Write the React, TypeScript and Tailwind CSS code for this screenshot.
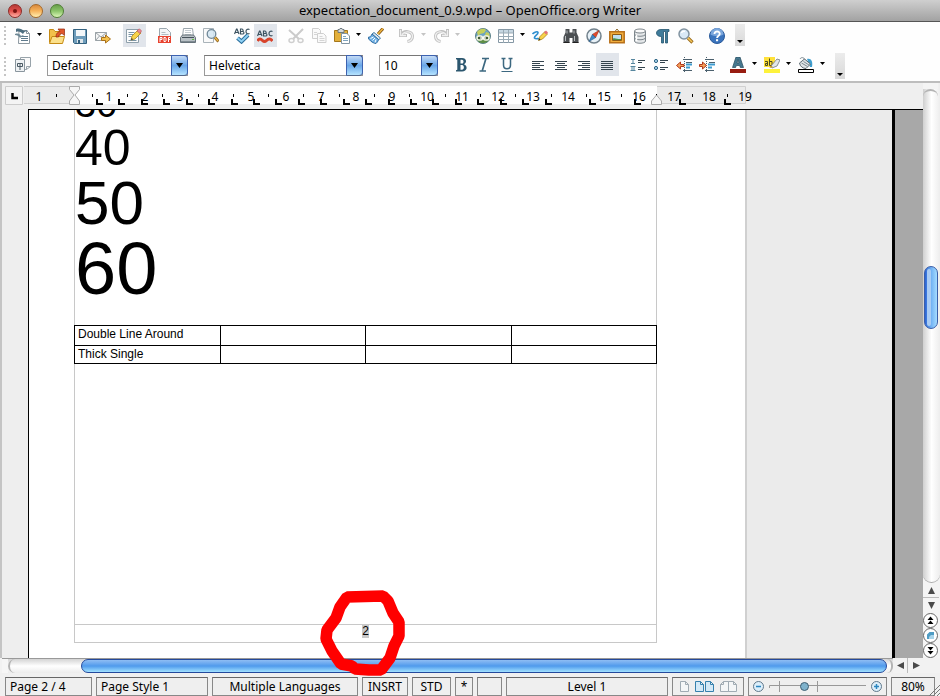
import React from "react";

type Kids = { children?: React.ReactNode };

const Svg = ({ children }: Kids) => (
  <svg width="16" height="16" viewBox="0 0 16 16" fill="none" aria-hidden="true">{children}</svg>
);

/* ---------- toolbar glyphs ---------- */
const icons: Record<string, React.ReactNode> = {
  "New document": (
    <Svg>
      <path d="M4 2.500h7.500l3 3v10h-11z" fill="#fff" stroke="#8b979f" />
      <path d="M11.500 2.500v3h3" stroke="#8b979f" />
      <path d="M6 8.500h7M6 10.500h7M6 12.500h7" stroke="#5f7b8d" />
      <path d="M1 1c3-1 6 0 8 2 2-1 3-1 4 0-3 0-4 1-5 3C6 4 4 3 1 4z" fill="#4d6e80" />
      <path d="M0 6c3-1 5 0 6 2 1-1 2-1 3 0-2 0-3 1-4 2-1-2-3-3-5-3z" fill="#6f8996" />
    </Svg>
  ),
  Open: (
    <Svg>
      <path d="M.5 14.500v-13h4l1.500 2h5v4" fill="#f2c14b" stroke="#c58a14" />
      <path d="M.5 15.500 3 8.500h12.500l-2 7z" fill="#fbe08a" stroke="#c58a14" />
      <path d="M7 9c0-4 2-5 4-5.500L9 1h6.500v6.500L13 5.500C11 6 10 7 9.500 9z" fill="#e0572b" stroke="#8f2a10" strokeWidth=".7" />
    </Svg>
  ),
  Save: (
    <Svg>
      <path d="M1.500 1.500h13v14h-12l-1-1z" fill="#6f9dbb" stroke="#33617f" />
      <path d="M4 2h9v6H4z" fill="#f4f7f9" />
      <path d="M5 11h6v4H5z" fill="#dfe6ea" />
      <path d="M6 12h2v3H6z" fill="#33617f" />
    </Svg>
  ),
  "Document as e-mail": (
    <Svg>
      <path d="M.5 4.500h11v8H.5z" fill="#f6f6f6" stroke="#9aa2a7" />
      <path d="m.5 4.500 5.500 4.500 5.500-4.500M.5 12.500 4.500 8M11.500 12.500 8 8" stroke="#9aa2a7" />
      <path d="M6.500 9.500h4V7l5 4-5 4v-2.500h-4z" fill="#f5c14d" stroke="#a8701a" />
    </Svg>
  ),
  "Edit file": (
    <Svg>
      <path d="M.5 1.500h12v13H.5z" fill="#fdfdfd" stroke="#8fa0ab" />
      <path d="M2.500 4.500h6M2.500 6.500h5M2.500 8.500h3M2.500 12.500h8" stroke="#7a94a5" />
      <path d="m5 12 1-4 6-6 3 3-6 6z" fill="#f8d34a" stroke="#b08418" strokeWidth=".8" />
      <path d="m11 3 1.500-1.800c1-.8 3.500 1.300 2.700 2.500L14 5.500z" fill="#e88a93" stroke="#b6535d" strokeWidth=".6" />
      <path d="m5 12 .6-2 1.500 1.300z" fill="#333" />
    </Svg>
  ),
  "Export as PDF": (
    <Svg>
      <path d="M2.500.5h7l4 4v5h-11z" fill="#f4f6f7" stroke="#9aa7af" />
      <path d="M4.500 4.500h4M4.500 6.500h7" stroke="#b3bec5" />
      <path d="M1 8h13v7H1z" fill="#e8432f" />
      <path d="M3 14V9.500h2v2H3M7 9.500h1.500l.5.500v3l-.5.500H7zM11.500 14V9.500H13M11.500 11.500H13" stroke="#fff" />
    </Svg>
  ),
  Print: (
    <Svg>
      <path d="M3.500.5h9l1 8h-11z" fill="#fff" stroke="#9ba6ad" />
      <path d="M5 2.500h6M5 4.500h6M5 6.500h6" stroke="#c3cbd0" />
      <path d="M.5 9.500 2.500 7h11l2 2.500v5H.5z" fill="#b8c0c5" stroke="#66727a" />
      <path d="M2 9.500h12" stroke="#46525a" />
      <path d="M1 13.500h14" stroke="#7f8b92" />
      <path d="M12 11.500h2" stroke="#5cb83c" />
    </Svg>
  ),
  "Page preview": (
    <Svg>
      <path d="M.5.500h10v14H.5z" fill="#fafafa" stroke="#a9b3b9" />
      <circle cx="8.500" cy="6" r="4.300" fill="#d4e6f2" fillOpacity=".85" stroke="#6f8797" strokeWidth="1.300" />
      <path d="m12 9.500 3.500 4" stroke="#8a5f1d" strokeWidth="3" />
      <path d="m12 9.500 3 3.500" stroke="#e9b84c" strokeWidth="1.400" />
    </Svg>
  ),
  Spellcheck: (
    <Svg>
      <path d="m.5 6 2-5h.5l2 5M1.500 4.500h3M6.500 1v5h2.500c1.500-.5 1-2 0-2.500H6.500h2c1-.5.8-2-.5-2.500zM15.500 1.500c-2-1-3.500.2-3.500 2s1.500 3 3.500 2" stroke="#3b5260" strokeWidth="1.200" />
      <path d="m3.500 10 4 3.500L14 7" stroke="#2a6e9c" strokeWidth="4" />
      <path d="m3.500 10 4 3.500L14 7" stroke="#8fd1f4" strokeWidth="2" />
    </Svg>
  ),
  "Auto spellcheck": (
    <Svg>
      <path d="m.5 8 2-5h.5l2 5M1.500 6.500h3M6.500 3v5h2.500c1.500-.5 1-2 0-2.500H6.500h2c1-.5.8-2-.5-2.500zM15.500 3.500c-2-1-3.500.2-3.500 2s1.500 3 3.500 2" stroke="#3b5260" strokeWidth="1.200" />
      <path d="M.5 13c1.500-2.500 3-2.500 5-.5 1.500 1.500 2.500 1.500 4 0 2-2 4-2 6 .5" stroke="#d8432b" strokeWidth="3" />
    </Svg>
  ),
  Cut: (
    <Svg>
      <path d="m1 2 10 9M15 1 5 11" stroke="#cbcbcb" strokeWidth="2" />
      <ellipse cx="3.500" cy="12.500" rx="2.500" ry="2" stroke="#cfcfcf" strokeWidth="1.500" />
      <ellipse cx="12.500" cy="12.500" rx="2.500" ry="2" stroke="#cfcfcf" strokeWidth="1.500" />
    </Svg>
  ),
  Copy: (
    <Svg>
      <path d="M1.500.5h6l2 2v8h-8z" fill="#fafafa" stroke="#cfcfcf" />
      <path d="M6.500 5.500h6l2.500 2.500v6.500h-8.500z" fill="#fafafa" stroke="#cfcfcf" />
      <path d="M3 4.500h3M3 6.500h3M8.500 8.500h3M8.500 10.500h5M8.500 12.500h5" stroke="#d5d5d5" />
    </Svg>
  ),
  Paste: (
    <Svg>
      <path d="M.5 2.500h13v11H.5z" fill="#e3b03c" stroke="#a5771a" />
      <path d="M4 1.500h1.500l.5-1h2l.5 1H10v3H4z" fill="#d5d9db" stroke="#6f7a80" />
      <path d="M7.500 5.500h5.500l2.500 2.500v7.500h-8z" fill="#fff" stroke="#8094a2" />
      <path d="M9 8.500h3M9 10.500h5M9 12.500h5" stroke="#7fa5c0" />
    </Svg>
  ),
  "Format paintbrush": (
    <Svg>
      <path d="m10 6 5-5.500" stroke="#7a4d10" strokeWidth="3" />
      <path d="m10 6 5-5.500" stroke="#f0b640" strokeWidth="1.600" />
      <path d="M6 4.500 12.500 10l-2 2L4 6z" fill="#dbe6ee" stroke="#3e78a4" />
      <path d="M4 6C3.500 8 2 9 0 9.500 1 12 4 15 8 15.500c1-1 2-2 2.500-4z" fill="#6fb0e4" stroke="#2f6ba0" />
      <path d="m2.500 10.500 3-1.500M4.500 12.500 7 10M7 14.500l1-3" stroke="#fff" />
    </Svg>
  ),
  Undo: (
    <Svg>
      <path d="M1.500 1v6.500H8M2.500 6.500C5 2 13 3 13.500 8c0 3-2 5-5 5.500" stroke="#bfbfbf" strokeWidth="3" />
      <path d="M1.500 2v5.500H7M3 6.500C6 2.500 13 3 13.500 8c0 3-2 5-4.500 5.500" stroke="#f0f0f0" strokeWidth="1.300" />
    </Svg>
  ),
  Redo: (
    <Svg>
      <path d="M14.500 1v6.500H8M13.500 6.500C11 2 3 3 2.500 8c0 3 2 5 5 5.500" stroke="#bfbfbf" strokeWidth="3" />
      <path d="M14.500 2v5.500H9M13 6.500C10 2.500 3 3 2.500 8c0 3 2 5 4.500 5.500" stroke="#f0f0f0" strokeWidth="1.300" />
    </Svg>
  ),
  Hyperlink: (
    <Svg>
      <circle cx="8" cy="8" r="7.500" fill="#6aa3c4" stroke="#5a7f86" />
      <path d="M2 4c3-4 7-4 9-2L9 5 5 6 3 8zM11 4l3 1 1 4-3 1-2-3z" fill="#c5cf5c" />
      <path d="M1 9h14c-1 8-13 8-14 0z" fill="#5f8f46" />
      <rect x="2" y="8" width="5.500" height="4" rx="2" fill="#3f5c34" stroke="#f2f4e6" strokeWidth="1.500" />
      <rect x="8.500" y="8" width="5.500" height="4" rx="2" fill="#3f5c34" stroke="#f2f4e6" strokeWidth="1.500" />
      <path d="M5 10h6" stroke="#fff" strokeWidth="1.200" />
    </Svg>
  ),
  Table: (
    <Svg>
      <path d="M.5 1.500h15v13H.5z" fill="#fff" stroke="#8497a4" />
      <path d="M1 2h14v3H1z" fill="#c7d7e2" />
      <path d="M.5 5h15M.5 8.500h15M.5 11.500h15M5.500 2v13M10.500 2v13" stroke="#9aaab5" />
    </Svg>
  ),
  "Show draw functions": (
    <Svg>
      <path d="M.5 6c2-2 5-3 5.500-1.500.5 2-4.500 4-3.500 5.500s4 0 5.500 1" stroke="#2f8fcf" strokeWidth="1.600" />
      <path d="m6.500 12.500 1.500-4 5-5 2.500 2.500-5 5z" fill="#f8d34a" stroke="#a98018" strokeWidth=".8" />
      <path d="m12 4.500 2-2 2 2-2 2z" fill="#e4707a" />
      <path d="m6.500 12.500.7-2 1.500 1.200z" fill="#333" />
    </Svg>
  ),
  "Find and replace": (
    <Svg>
      <path d="M2.500 1h4v3.500h3V1h4v3.500L15.500 9v6H9.500v-5h-3v5H.5V9l2-4.500z" fill="#4b4f52" />
      <path d="M2.500 8v5M11.500 8v5M4 2.500v3M11 2.500v3" stroke="#b5babd" />
      <path d="M.5 14.500h6M9.500 14.500h6" stroke="#202020" />
    </Svg>
  ),
  Navigator: (
    <Svg>
      <circle cx="8" cy="8" r="7" fill="#e9f2f8" stroke="#71818c" strokeWidth="1.500" />
      <path d="M13 2.500 9.600 9.600 6.400 6.400z" fill="#e04a2c" stroke="#a52a15" strokeWidth=".6" />
      <path d="m3 13.500 3.400-7.100 3.200 3.200z" fill="#3f87c4" stroke="#225a8c" strokeWidth=".6" />
    </Svg>
  ),
  Gallery: (
    <Svg>
      <path d="M6 3.500 8 1l2 2.500" stroke="#8d6a2c" />
      <path d="M.8 3.800h14.400v11H.8z" fill="#f0ad3d" stroke="#b8701a" strokeWidth="1.500" />
      <path d="M3.500 6.500h9v6h-9z" fill="#bfe0f2" stroke="#8d5b17" />
      <path d="M4 12v-1.500c2-1 5 1 8 .5v1z" fill="#4f8f4a" />
    </Svg>
  ),
  "Data sources": (
    <Svg>
      <path d="M2.500 3v10c0 3 11 3 11 0V3" fill="#e4e7e9" stroke="#7d868c" />
      <path d="M2.500 6c0 3 11 3 11 0M2.500 9.500c0 3 11 3 11 0" stroke="#7d868c" />
      <ellipse cx="8" cy="3" rx="5.500" ry="2" fill="#fafafa" stroke="#7d868c" />
      <path d="M4.500 7v6" stroke="#fff" strokeWidth="1.500" />
    </Svg>
  ),
  "Nonprinting characters": (
    <Svg>
      <path d="M14 1.500H6c-6 0-6 7 0 7h.5V15h2V3.500h2V15h2V3.500H14z" fill="#3f7b9a" stroke="#23566f" strokeWidth=".8" />
    </Svg>
  ),
  Zoom: (
    <Svg>
      <circle cx="6" cy="6" r="5" fill="#d9e9f6" stroke="#8193a0" strokeWidth="1.500" />
      <path d="M3.500 5c.5-1.500 2-2 3.500-1.500" stroke="#fff" strokeWidth="1.500" />
      <path d="m10 10 4.500 4.500" stroke="#996a1b" strokeWidth="3.200" />
      <path d="m10 10 4 4" stroke="#f4c65a" strokeWidth="1.600" />
    </Svg>
  ),
  Help: (
    <Svg>
      <circle cx="8" cy="8" r="7.500" fill="#3b74bd" stroke="#2a5a9a" />
      <path d="M1.500 6.500a6.500 6.500 0 0 1 13 0c-4 2-9 2-13 0z" fill="#7ba7dd" />
      <path d="M5.500 6c0-3.500 5.500-3.200 5.200 0-.2 1.700-2.600 1.800-2.600 4" stroke="#fff" strokeWidth="1.900" />
      <path d="M7 11.200h2.100v2H7z" fill="#fff" />
    </Svg>
  ),
  "Styles and formatting": (
    <Svg>
      <path d="M5.500.5h10v9l-4 3h-6z" fill="#fafafa" stroke="#98a3aa" />
      <path d="M15.500 9.500h-4v3" stroke="#98a3aa" />
      <path d="M.5 2.500h9v12H.5z" fill="#eef1f3" stroke="#8a969e" />
      <path d="M2.500 6.500h5v3h-5zM5 7v6" stroke="#4b5a64" />
    </Svg>
  ),
  Bold: (
    <Svg>
      <path fillRule="evenodd" d="M3 1h6c5 0 5 5 2 6.200 4 1.300 3.500 7.300-2 7.300H3v-1.300l1.300-.4V2.700L3 2.300zm4.500 1.700V6.500H9c2 0 2-3.800 0-3.800zm0 5.300v4.800H9c2.500 0 2.500-4.800 0-4.800z" fill="#2b566e" />
    </Svg>
  ),
  Italic: (
    <Svg>
      <path d="M6 1.500h7M9.800 2 6.200 14M3.500 14h6.500" stroke="#3c6880" strokeWidth="1.700" />
    </Svg>
  ),
  Underline: (
    <Svg>
      <path d="M2.500 1.500h4M9.500 1.500h4M4.500 2v6c0 5 7 5 7 0V2" stroke="#3c6880" strokeWidth="1.500" />
      <path d="M2.500 14.500h11" stroke="#3c6880" />
    </Svg>
  ),
  "Align left": (
    <Svg><path d="M2 4.500h12M2 6.500h8M2 8.500h12M2 10.500h8M2 12.500h12" stroke="#34444e" /></Svg>
  ),
  Centered: (
    <Svg><path d="M2 4.500h12M4 6.500h8M2 8.500h12M4 10.500h8M2 12.500h12" stroke="#34444e" /></Svg>
  ),
  "Align right": (
    <Svg><path d="M2 4.500h12M6 6.500h8M2 8.500h12M6 10.500h8M2 12.500h12" stroke="#34444e" /></Svg>
  ),
  Justified: (
    <Svg><path d="M2 4.500h12M2 6.500h12M2 8.500h12M2 10.500h12M2 12.500h12" stroke="#34444e" /></Svg>
  ),
  "Numbering on/off": (
    <Svg>
      <path d="M1 2.500h4M3 2.500v4M1 6.500h4M.5 9.500h5M.5 13.500h5M2 9.500v4M4 9.500v4" stroke="#57879f" />
      <path d="M8 3.500h7M8 5.500h4M8 10.500h7M8 12.500h4" stroke="#34444e" />
    </Svg>
  ),
  "Bullets on/off": (
    <Svg>
      <circle cx="3" cy="4" r="1.600" fill="#a8d2ea" stroke="#2c6484" />
      <circle cx="3" cy="11" r="1.600" fill="#a8d2ea" stroke="#2c6484" />
      <path d="M7 3.500h8M7 5.500h5M7 10.500h8M7 12.500h5" stroke="#34444e" />
    </Svg>
  ),
  "Decrease indent": (
    <Svg>
      <path d="M7 2.500h9M10 5.500h6M7 13.500h9" stroke="#4b606d" />
      <path d="M10 7.500h6M10 10.500h4" stroke="#3d9bd0" strokeWidth="2" />
      <path d="M8.500 0v16" stroke="#4b606d" strokeDasharray="1 1" />
      <path d="M.5 8.500 4.500 5v2.500H8v2H4.500V12z" fill="#f1a15a" stroke="#b5381b" />
    </Svg>
  ),
  "Increase indent": (
    <Svg>
      <path d="M6 2.500h9M10 5.500h6M6 13.500h9" stroke="#4b606d" />
      <path d="M9 7.500h7M9 10.500h4" stroke="#3d9bd0" strokeWidth="2" />
      <path d="M7.500 0v16" stroke="#4b606d" strokeDasharray="1 1" />
      <path d="M7.500 8.500 3.500 5v2.500H.5v2h3V12z" fill="#f1a15a" stroke="#b5381b" />
    </Svg>
  ),
  "Font color": (
    <Svg>
      <path fillRule="evenodd" d="M6 0h4l3.500 10.500H10.300L9.700 8.500H6.300l-.7 2H2.500zM7 6h2L8 2.500z" fill="#47788f" stroke="#25495c" strokeWidth=".7" />
      <path d="M0 12h16v4H0z" fill="#971c10" />
    </Svg>
  ),
  Highlighting: (
    <Svg>
      <path d="M0 0h11v10H0z" fill="#ffe13a" />
      <path d="M1 4.500h2.500v4H1.500V6.500h2M5.500 1.500v7H8v-4H5.500" stroke="#4a4a20" />
      <path d="m7 9 6-7 3 1-3 6-5 2z" fill="#e2e6e8" stroke="#707a80" strokeWidth=".8" />
      <path d="m5.500 11 1-2.500 2.500 1.500z" fill="#d0940f" />
      <path d="M0 12h16v4H0z" fill="#fdf23b" />
    </Svg>
  ),
  "Background color": (
    <Svg>
      <path d="M9 2c4-1 6 2 5 8h-2z" fill="#3f9fd0" />
      <path d="m1.500 6 5-4 6 5-4.500 4.500c-3 0-6-2-6.500-5.500z" fill="#dfe4e7" stroke="#5d6a72" />
      <path d="m3.500 6 6 3.500M5.500 4.500l5.500 3.500M2 2c1-2 4-2 5 1" stroke="#7d8990" />
      <path d="M.5 12.500h15v3H.5z" fill="#fff" stroke="#000" />
    </Svg>
  ),
};

/* ---------- toolbar parts ---------- */
const Handle = () => (
  <div className="flex h-[19px] w-3 shrink-0 flex-col justify-between self-center pl-1">
    {[0, 1, 2, 3, 4].map((i) => (
      <span key={i} className="h-0.5 w-0.5 bg-[#c4c4c4]" />
    ))}
  </div>
);

const Tool = ({ name, on }: { name: string; on?: boolean }) => (
  <button
    type="button"
    aria-label={name}
    className={on ? "h-[23px] w-[23px] shrink-0 bg-[#e1e5eb] p-[3px]" : "h-[23px] w-[23px] shrink-0 p-[3px]"}
  >
    {icons[name]}
  </button>
);

const Drop = ({ label, dim }: { label: string; dim?: boolean }) => (
  <button type="button" aria-label={label} className="flex h-[21px] w-[11px] shrink-0 items-center pl-0.5">
    <svg width="5" height="3" viewBox="0 0 5 3" fill={dim ? "#c4c4c4" : "#000"} aria-hidden="true">
      <path d="M0 0h5L2.500 3z" />
    </svg>
  </button>
);

const Gap = () => <span className="w-2 shrink-0" />;

const More = ({ label }: { label: string }) => (
  <button
    type="button"
    aria-label={label}
    className="ml-1.5 flex w-2.5 shrink-0 items-end justify-center self-stretch bg-gradient-to-b from-[#ececec] to-[#d8d8d8] pb-[3px]"
  >
    <svg width="6" height="3" viewBox="0 0 6 3" aria-hidden="true"><path d="M0 0h6L3 3z" /></svg>
  </button>
);

const Combo = ({ label, value, width }: { label: string; value: string; width: string }) => (
  <label className={`grid h-[21px] shrink-0 ${width}`}>
    <select
      aria-label={label}
      defaultValue={value}
      className="col-start-1 row-start-1 h-[21px] w-full appearance-none border border-[#9a9a9a] border-t-[#777] bg-white pl-1 text-xs leading-[17px] outline-none"
    >
      <option>{value}</option>
    </select>
    <span className="pointer-events-none col-start-1 row-start-1 flex h-[21px] w-[17px] items-center justify-center justify-self-end rounded-r border border-[#3d62b0] border-b-[#54688a] bg-gradient-to-b from-[#c3daf5] via-[#69a6e8] to-[#b5e4ff]">
      <svg width="7" height="5" viewBox="0 0 7 5" aria-hidden="true"><path d="M0 0h7L3.500 5z" /></svg>
    </span>
  </label>
);

/* ---------- ruler ---------- */
const CM = 35.3;
const ZERO = 74;
const TAB_STEP = 22.43;
const cms = Array.from({ length: 19 }, (_, i) => i + 1);
const tabs = Array.from({ length: 29 }, (_, i) => i).filter((i) => ![21, 23, 25, 27].includes(i));

const Ruler = () => (
  <svg width="760" height="26" className="block h-[26px] shrink-0" fontSize="12" aria-label="Ruler">
    <path d="M5.500 3.500h17v18h-17z" fill="#f4f4f4" stroke="#ccc" />
    <path d="M12.500 10v5h5.500" fill="none" stroke="#000" strokeWidth="2.500" />
    <path d="M24 3.500h721.500v17H24" fill="#ebebeb" stroke="#d0d0d0" />
    <path d="M74 3h583v18H74z" fill="#fff" />
    {cms.map((n) => (
      <React.Fragment key={n}>
        <text x={Math.round(ZERO + n * CM)} y="18" textAnchor="middle">{n}</text>
        <path d={`M${Math.round(ZERO + (n - 0.5) * CM)}.5 11v3`} stroke="#000" />
      </React.Fragment>
    ))}
    <text x="39" y="18" textAnchor="middle">1</text>
    <path d="M56.500 11v3" stroke="#000" />
    {tabs.map((i) => (
      <path key={i} d={`M${Math.round(96 + i * TAB_STEP) + 1} 16v5h6`} fill="none" stroke="#000" strokeWidth="2" />
    ))}
    <path d="M69.500 3.500h10v3L75 12l4.500 6v3.500h-10V18l4.500-6-4.500-5.500z" fill="#f6f6f6" stroke="#aaa" />
    <path d="M651.500 21.500V18l5-6 5 6v3.500z" fill="#f6f6f6" stroke="#aaa" />
  </svg>
);

/* ---------- scroll bars ---------- */
const arrow: Record<string, string> = {
  up: "M0 8h8L4 0z",
  down: "M0 0h8L4 8z",
  left: "M8 0v8L0 4z",
  right: "M0 0v8l8-4z",
};
const Arrow = ({ dir, className }: { dir: string; className: string }) => (
  <button type="button" aria-label={`Scroll ${dir}`} className={`flex shrink-0 items-center justify-center ${className}`}>
    <svg width="7" height="7" viewBox="0 0 8 8" fill="#4a4a4a" aria-hidden="true"><path d={arrow[dir]} /></svg>
  </button>
);

const Round = ({ label, children }: Kids & { label: string }) => (
  <button type="button" aria-label={label} className="flex h-[15px] w-[15px] shrink-0 items-center justify-center rounded-full border border-[#666] bg-white">
    <svg width="9" height="9" viewBox="0 0 9 9" aria-hidden="true">{children}</svg>
  </button>
);

const VScroll = () => (
  <div className="flex w-[17px] shrink-0 flex-col bg-[#f4f4f4]">
    <div className="flex flex-1 flex-col rounded-b-full border-b border-[#aaa] bg-gradient-to-r from-[#cfcfcf] via-white to-[#ededed] pr-0.5">
      <div className="h-1.5 shrink-0 bg-[#f4f4f4]" />
      <div className="h-3 rounded-t-full border-t-2 border-[#b4b4b4]" />
      <div className="grow-[166]" />
      <div className="ml-px h-[63px] shrink-0 rounded-full border border-[#3a5ea8] bg-gradient-to-r from-[#2b62d2] via-[#6fb0f3] to-[#a5dcff] p-0.5">
        <div className="h-full w-1 rounded-full bg-[#a9ccf4]" />
      </div>
      <div className="grow-[254]" />
    </div>
    <Arrow dir="up" className="h-[15px] w-4 border-b border-[#bbb]" />
    <Arrow dir="down" className="h-[15px] w-4" />
    <Round label="Previous page"><path d="M1.500 4h6l-3-3.500zM1.500 8h6l-3-3.500z" /></Round>
    <Round label="Navigation"><path d="M1 8V3.500L3.500 1H8v3H5v4z" fill="#4f9cc4" /><path d="M3 8V6l2-2h3v4z" fill="#a9d4ea" /></Round>
    <Round label="Next page"><path d="M1.500 1h6l-3 3.500zM1.500 5h6l-3 3.500z" /></Round>
  </div>
);

const HScroll = () => (
  <div className="flex h-[15px] shrink-0 bg-[#f2f2f2] pl-0.5">
    <div className="flex min-w-0 flex-1 border-t border-[#999] bg-gradient-to-b from-[#d4d4d4] via-white to-[#ececec]">
      <div className="w-1.5 shrink-0 bg-[#f6f6f6]" />
      <div className="w-4 shrink-0 rounded-l-full border-l-2 border-[#b4b4b4]" />
      <div className="grow-[57]" />
      <div className="grow-[806] rounded-full border border-[#24499c] bg-gradient-to-b from-[#8fbdf3] via-[#4f9aec] to-[#a2e2ff]" />
      <div className="w-1.5 shrink-0 rounded-r-full border-r-2 border-[#b4b4b4]" />
    </div>
    <Arrow dir="left" className="w-[15px] border-r border-[#bbb]" />
    <Arrow dir="right" className="w-[17px]" />
    <div className="w-[15px] shrink-0" />
  </div>
);

/* ---------- document ---------- */
const rows = [
  { text: "Double Line Around", height: "h-5" },
  { text: "Thick Single", height: "h-[18px]" },
];

const DocumentView = () => (
  <div className="flex min-h-0 flex-1 font-['Liberation_Sans',Arial,sans-serif]">
    <div className="w-[26px] shrink-0 bg-[#eee]" />
    <div className="flex min-w-0 flex-1 border-l border-t border-black bg-[#a8a8a8]">
      <main className="flex w-[716px] shrink-0 flex-col overflow-hidden bg-white pb-[15px] pl-[45px] pr-[88px]">
        <div className="flex min-h-0 flex-1 flex-col border-x border-[#c8c8c8]">
          <p className="-mt-6 h-[37px] shrink-0 text-[38px] leading-[37px]">30</p>
          <p className="shrink-0 text-[50px] leading-[50px]">40</p>
          <p className="shrink-0 text-[62px] leading-[60px]">50</p>
          <p className="shrink-0 text-[74px] leading-[72px]">60</p>
          <table className="-mx-px mt-5 w-[calc(100%+2px)] table-fixed border-collapse text-xs leading-[15px]">
            <tbody>
              {rows.map((r) => (
                <tr key={r.text} className={r.height}>
                  {[r.text, "", "", ""].map((c, i) => (
                    <td key={i} className="border border-black px-[3px] pb-0 pt-px align-top">{c}</td>
                  ))}
                </tr>
              ))}
            </tbody>
          </table>
        </div>
        <footer className="h-[19px] shrink-0 border border-[#c8c8c8] text-center text-xs leading-3">
          <span className="inline-block h-[13px] bg-[#c8c8c8]">2</span>
        </footer>
      </main>
      <aside aria-label="Notes margin" className="w-[150px] shrink-0 border-l-2 border-r-[3px] border-l-[#d0d0d0] border-r-black bg-[#ebebeb]" />
    </div>
  </div>
);

/* ---------- status bar ---------- */
const Cell = ({ children, className }: Kids & { className: string }) => (
  <div className={`flex h-[19px] shrink-0 items-center border border-[#888] border-t-[#666] bg-[#efefef] ${className}`}>{children}</div>
);

const PageGlyph = ({ w, d, color, fill }: { w: number; d: string; color: string; fill: string }) => (
  <svg width={w} height="12" viewBox={`0 0 ${w} 12`} aria-hidden="true"><path d={d} fill={fill} stroke={color} /></svg>
);

const ZoomButton = ({ label, d }: { label: string; d: string }) => (
  <button type="button" aria-label={label} className="h-[11px] w-[11px] shrink-0">
    <svg width="11" height="11" viewBox="0 0 11 11" aria-hidden="true">
      <circle cx="5.500" cy="5.500" r="5" fill="#dceefa" stroke="#60788a" />
      <path d={d} stroke="#2a86c0" strokeWidth="1.500" />
    </svg>
  </button>
);

const StatusBar = () => (
  <div className="flex shrink-0 gap-1 bg-[#f0f0f0] px-[5px] pt-1 text-xs">
    <Cell className="w-[87px] pl-1">Page 2 / 4</Cell>
    <Cell className="w-[112px] pl-1">Page Style 1</Cell>
    <Cell className="w-[146px] justify-center">Multiple Languages</Cell>
    <Cell className="w-[46px] justify-center">INSRT</Cell>
    <Cell className="w-[39px] justify-center">STD</Cell>
    <Cell className="w-[18px] justify-center">*</Cell>
    <Cell className="w-[25px]" />
    <Cell className="min-w-0 flex-1 justify-center">Level 1</Cell>
    <Cell className="w-[72px] justify-center gap-[5px]">
      <button type="button" aria-label="Single page"><PageGlyph w={10} d="M.5.500h5l3 3v7h-8zM5.500.500v3h3" color="#a0abb3" fill="#f4f6f7" /></button>
      <button type="button" aria-label="Multiple pages"><PageGlyph w={20} d="M.5.500h5l3 3v7h-8zM5.500.500v3h3M10.500.500h5l3 3v7h-8zM15.500.500v3h3" color="#3580ad" fill="#d3e9f7" /></button>
      <button type="button" aria-label="Book view"><PageGlyph w={17} d="M8.500.500v10h-8v-7l3-3zM.5 3.500h3v-3M8.500.500h5l3 3v7h-8zM13.500.500v3h3" color="#a0abb3" fill="#f4f6f7" /></button>
    </Cell>
    <Cell className="w-[139px] gap-[5px] pl-1">
      <ZoomButton label="Zoom out" d="M3 5.500h5" />
      <div className="grid w-[97px]">
        <svg width="97" height="13" viewBox="0 0 97 13" className="col-start-1 row-start-1" fill="none" stroke="#999" aria-hidden="true">
          <path d="M.5 8V5.500H97M10.500 1v11M48.500 1v11" />
        </svg>
        <input
          type="range"
          aria-label="Zoom"
          min={0}
          max={100}
          defaultValue={35}
          className="col-start-1 row-start-1 h-[13px] w-[97px] appearance-none bg-transparent [&::-webkit-slider-thumb]:h-[9px] [&::-webkit-slider-thumb]:w-[9px] [&::-webkit-slider-thumb]:appearance-none [&::-webkit-slider-thumb]:rounded-full [&::-webkit-slider-thumb]:border [&::-webkit-slider-thumb]:border-[#3f5f72] [&::-webkit-slider-thumb]:bg-[#7eb2cc]"
        />
      </div>
      <ZoomButton label="Zoom in" d="M3 5.500h5M5.500 3v5" />
    </Cell>
    <Cell className="w-11 justify-center">80%</Cell>
  </div>
);

const lights = [
  { label: "Close", cls: "border-[#8c2a26] from-[#b63a36] via-[#e2504b] to-[#ffb0a8]" },
  { label: "Minimize", cls: "border-[#a5692a] from-[#d98a3e] via-[#f7b45c] to-[#fff0b0]" },
  { label: "Zoom window", cls: "border-[#4f7e35] from-[#6aa04b] via-[#8cc56a] to-[#dcf7b8]" },
];

export default function App() {
  return (
    <div className="relative flex h-screen min-h-[400px] flex-col overflow-hidden bg-[#f0f0f0] font-['Noto_Sans','Open_Sans',sans-serif] text-black">
      <header className="flex h-[22px] shrink-0 items-center border-b border-[#555] bg-gradient-to-b from-[#cfcfcf] to-[#a2a2a2] px-2">
        <div className="flex flex-1 gap-[7px]">
          {lights.map((l) => (
            <button key={l.label} type="button" aria-label={l.label} className={`flex h-3.5 w-3.5 items-center justify-center rounded-full border bg-gradient-to-b ${l.cls}`}>
              {l.label === "Close" && <span className="h-1 w-1 rounded-full bg-[#7a1512]" />}
            </button>
          ))}
        </div>
        <h1 className="text-[13px] leading-[21px]">expectation_document_0.9.wpd – OpenOffice.org Writer</h1>
        <div className="flex-1" />
      </header>

      <div role="toolbar" aria-label="Standard" className="flex h-[30px] shrink-0 items-start bg-[#fefefe] pb-1.5 pt-0.5">
        <Handle />
        <Tool name="New document" /><Drop label="New menu" /><Tool name="Open" /><Tool name="Save" /><Tool name="Document as e-mail" />
        <Gap /><Tool name="Edit file" on />
        <Gap /><Tool name="Export as PDF" /><Tool name="Print" /><Tool name="Page preview" />
        <Gap /><Tool name="Spellcheck" /><Tool name="Auto spellcheck" on />
        <Gap /><Tool name="Cut" /><Tool name="Copy" /><Tool name="Paste" /><Drop label="Paste menu" /><Tool name="Format paintbrush" />
        <Gap /><Tool name="Undo" /><Drop label="Undo menu" dim /><Tool name="Redo" /><Drop label="Redo menu" dim />
        <Gap /><Tool name="Hyperlink" /><Tool name="Table" /><Drop label="Table menu" /><Tool name="Show draw functions" />
        <Gap /><Tool name="Find and replace" /><Tool name="Navigator" /><Tool name="Gallery" /><Tool name="Data sources" /><Tool name="Nonprinting characters" /><Tool name="Zoom" />
        <Gap /><Tool name="Help" />
        <More label="More standard tools" />
      </div>

      <div role="toolbar" aria-label="Formatting" className="flex h-[29px] shrink-0 items-start bg-[#fefefe] pb-0.5 pt-px">
        <Handle />
        <Tool name="Styles and formatting" />
        <div className="flex shrink-0 gap-4 pl-3 pr-3 pt-0.5">
          <Combo label="Paragraph style" value="Default" width="w-[141px]" />
          <Combo label="Font name" value="Helvetica" width="w-[159px]" />
          <Combo label="Font size" value="10" width="w-[59px]" />
        </div>
        <Tool name="Bold" /><Tool name="Italic" /><Tool name="Underline" />
        <Gap /><Tool name="Align left" /><Tool name="Centered" /><Tool name="Align right" /><Tool name="Justified" on />
        <Gap /><Tool name="Numbering on/off" /><Tool name="Bullets on/off" /><Tool name="Decrease indent" /><Tool name="Increase indent" />
        <Gap /><Tool name="Font color" /><Drop label="Font color menu" /><Tool name="Highlighting" /><Drop label="Highlighting menu" /><Tool name="Background color" /><Drop label="Background color menu" />
        <More label="More formatting tools" />
      </div>

      <div className="flex min-h-0 flex-1 border-t-2 border-[#bdbdbd]">
        <div className="flex min-w-0 flex-1 flex-col overflow-hidden border-l-2 border-[#c4c4c4] bg-[#efefef]">
          <div className="-ml-0.5 flex shrink-0"><Ruler /></div>
          <DocumentView />
        </div>
        <VScroll />
      </div>
      <HScroll />
      <StatusBar />

      <svg className="pointer-events-none absolute bottom-[18px] left-[318px]" width="90" height="90" viewBox="318 588 90 90" fill="none" aria-hidden="true">
        <path d="m347 597 36-1 5 5 5 12 6 9v14l-5 10-4 12-9 12h-12l-14-1-3-3-11-2-9-13-6-12 1-9 9-12 4-11z" stroke="#f00" strokeWidth="11.500" strokeLinejoin="bevel" />
      </svg>
      <svg className="pointer-events-none absolute bottom-0 right-0" width="12" height="12" viewBox="0 0 12 12" stroke="#777" aria-hidden="true">
        <path d="M1 12 12 1M5 12l7-7M9 12l3-3" />
      </svg>
    </div>
  );
}
